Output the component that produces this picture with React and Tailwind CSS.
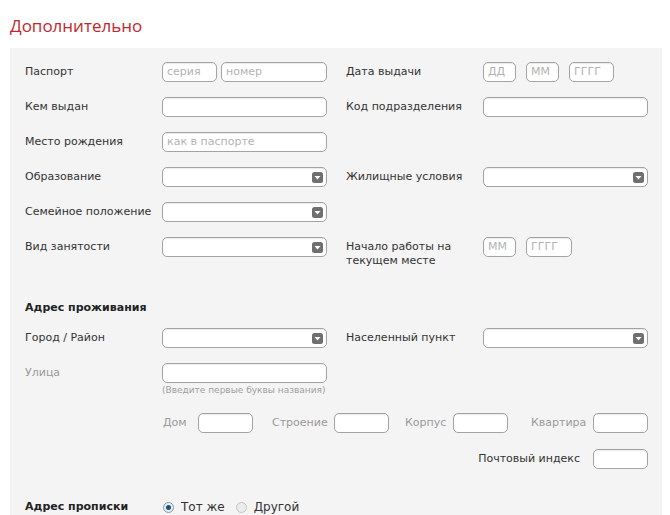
import { useState } from "react";

const font = { fontFamily: '"DejaVu Sans", Verdana, sans-serif' };

function Field({ w = "w-[165px]", placeholder = "" }) {
  return (
    <div
      className={`${w} h-[20px] shrink-0 rounded-[5px] border border-[#a3a3a3] bg-white px-[4px] text-[11px] leading-[18px] text-[#b3b3b3] shadow-[inset_0_1px_1px_rgba(0,0,0,0.08)]`}
    >
      {placeholder}
    </div>
  );
}

function Select() {
  return (
    <div className="flex h-[20px] w-[165px] shrink-0 items-center justify-end rounded-[5px] border border-[#a3a3a3] bg-white pr-[3px] shadow-[inset_0_1px_1px_rgba(0,0,0,0.08)]">
      <svg width="11" height="11" viewBox="0 0 11 11">
        <rect x="0" y="0" width="11" height="11" rx="2.5" fill="#6f6f6f" />
        <path d="M2.5 4 L8.5 4 L5.5 7.5 Z" fill="#fff" />
      </svg>
    </div>
  );
}

function Label({ children, muted, className = "" }) {
  return (
    <div
      className={`w-[137px] shrink-0 text-[11px] leading-[14px] ${
        muted ? "text-[#9a9a9a]" : "text-[#333]"
      } ${className}`}
    >
      {children}
    </div>
  );
}

function Radio({ checked, label, onClick }) {
  return (
    <button onClick={onClick} className="flex items-center gap-[7px] text-[12px] text-[#333]">
      <span
        className={`flex h-[11px] w-[11px] items-center justify-center rounded-full border ${
          checked ? "border-[#8a9aa8] bg-[#e6eef4]" : "border-[#c4c4c4] bg-[#ececec]"
        }`}
      >
        {checked && <span className="h-[5px] w-[5px] rounded-full bg-[#1f4e79]" />}
      </span>
      {label}
    </button>
  );
}

export default function App() {
  const [same, setSame] = useState(true);

  return (
    <div className="h-[515px] w-[670px] overflow-hidden bg-white" style={font}>
      <h1
        className="pl-[10px] pt-[14px] text-[17px] leading-[24px] text-[#c2272d]"
        style={{ fontFamily: '"Open Sans", "Noto Sans", sans-serif' }}
      >
        Дополнительно
      </h1>

      <div className="ml-[10px] mt-[10px] h-[480px] w-[652px] bg-[#f4f4f4] pl-[15px] pt-[14px]">
        {/* паспорт и прочее */}
        <div className="flex flex-col gap-[15px]">
          <div className="flex items-center">
            <Label>Паспорт</Label>
            <div className="flex gap-[4px]">
              <Field w="w-[55px]" placeholder="серия" />
              <Field w="w-[106px]" placeholder="номер" />
            </div>
            <Label className="ml-[19px]">Дата выдачи</Label>
            <div className="flex gap-[10px]">
              <Field w="w-[33px]" placeholder="ДД" />
              <Field w="w-[33px]" placeholder="ММ" />
              <Field w="w-[45px]" placeholder="ГГГГ" />
            </div>
          </div>

          <div className="flex items-center">
            <Label>Кем выдан</Label>
            <Field />
            <Label className="ml-[19px]">Код подразделения</Label>
            <Field />
          </div>

          <div className="flex items-center">
            <Label>Место рождения</Label>
            <Field placeholder="как в паспорте" />
          </div>

          <div className="flex items-center">
            <Label>Образование</Label>
            <Select />
            <Label className="ml-[19px]">Жилищные условия</Label>
            <Select />
          </div>

          <div className="flex items-center">
            <Label>Семейное положение</Label>
            <Select />
          </div>

          <div className="flex items-start">
            <Label className="pt-[3px]">Вид занятости</Label>
            <Select />
            <Label className="ml-[19px] pt-[3px]">
              Начало работы на
              <br />
              текущем месте
            </Label>
            <div className="flex gap-[10px]">
              <Field w="w-[33px]" placeholder="ММ" />
              <Field w="w-[46px]" placeholder="ГГГГ" />
            </div>
          </div>
        </div>

        {/* адрес проживания */}
        <div className="mt-[33px] text-[11px] font-bold leading-[14px] text-[#222]">
          Адрес проживания
        </div>

        <div className="mt-[13px] flex items-center">
          <Label>Город / Район</Label>
          <Select />
          <Label className="ml-[19px]">Населенный пункт</Label>
          <Select />
        </div>

        <div className="mt-[15px] flex items-start">
          <Label muted className="pt-[3px]">Улица</Label>
          <div>
            <Field />
            <div className="mt-[1px] text-[9px] leading-[12px] text-[#a0a0a0]">
              (Введите первые буквы названия)
            </div>
          </div>
        </div>

        <div className="mt-[17px] flex items-center pl-[138px] text-[11px] text-[#9a9a9a]">
          <span className="w-[35px]">Дом</span>
          <Field w="w-[55px]" />
          <span className="ml-[19px] w-[62px]">Строение</span>
          <Field w="w-[55px]" />
          <span className="ml-[16px] w-[48px]">Корпус</span>
          <Field w="w-[55px]" />
          <span className="ml-[23px] w-[62px]">Квартира</span>
          <Field w="w-[55px]" />
        </div>

        <div className="mt-[16px] flex items-center justify-end pr-[14px]">
          <span className="mr-[13px] text-[11px] text-[#333]">Почтовый индекс</span>
          <Field w="w-[55px]" />
        </div>

        <div className="mt-[29px] flex items-center">
          <div className="w-[138px] shrink-0 text-[11px] font-bold text-[#222]">Адрес прописки</div>
          <div className="flex gap-[11px]">
            <Radio checked={same} label="Тот же" onClick={() => setSame(true)} />
            <Radio checked={!same} label="Другой" onClick={() => setSame(false)} />
          </div>
        </div>
      </div>
    </div>
  );
}
